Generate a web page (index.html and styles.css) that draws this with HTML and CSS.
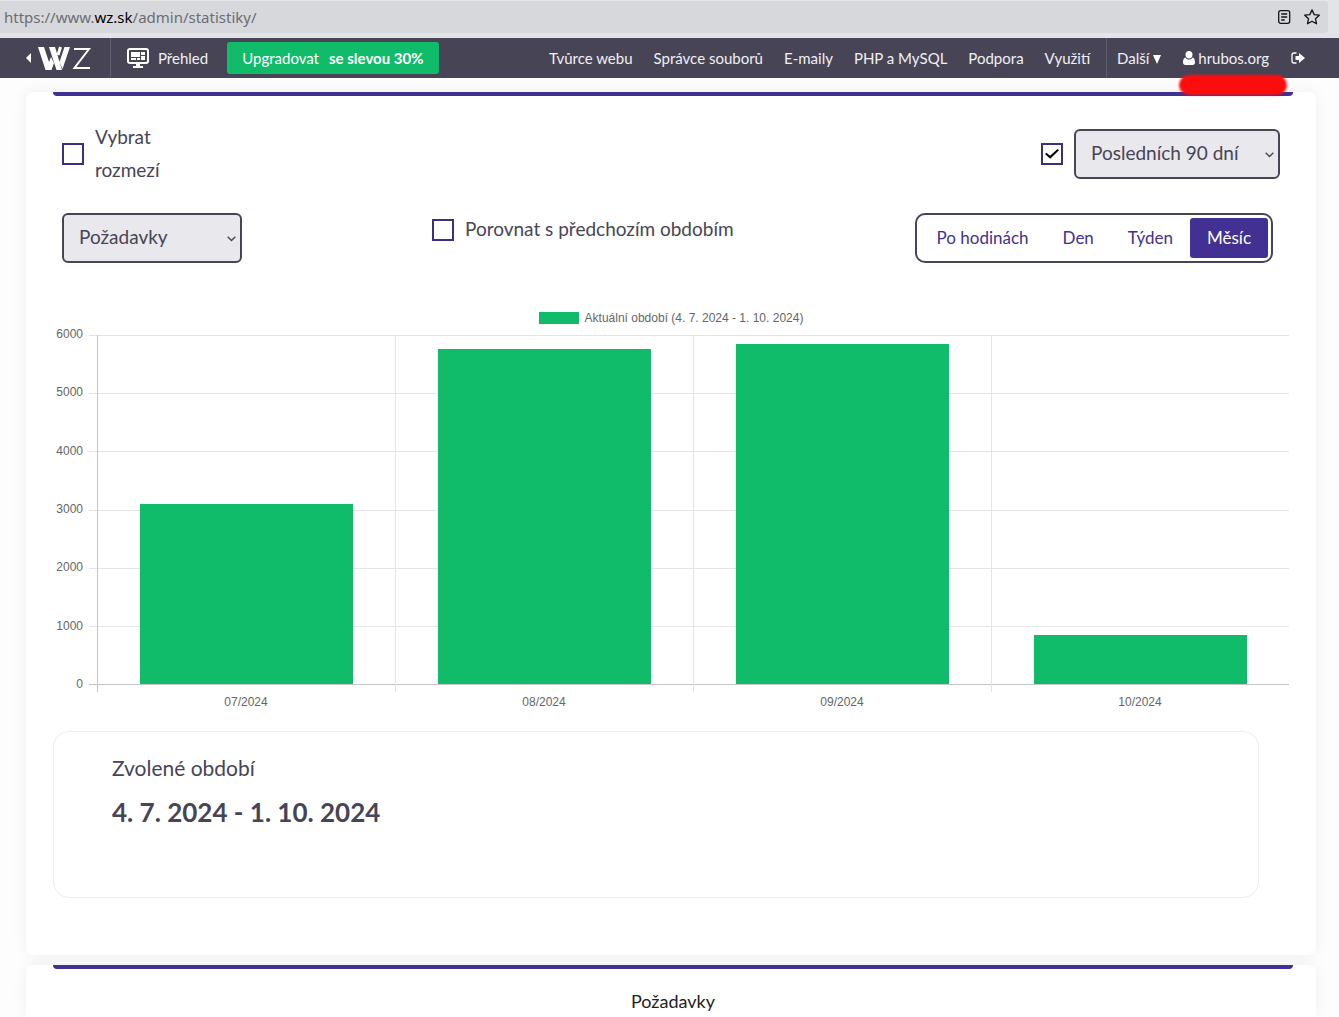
FILE: index.html
```html
<!DOCTYPE html>
<html lang="cs">
<head>
<meta charset="utf-8">
<meta name="viewport" content="width=device-width, initial-scale=1">
<title>Statistiky</title>
<link rel="stylesheet" href="styles.css">
</head>
<body>
<div class="urlbar">
  <div class="urlbar-field">
    <span class="url">https://www.<b>wz.sk</b>/admin/statistiky/</span>
    <svg class="url-icon" viewBox="0 0 16 16" width="16" height="16" aria-hidden="true"><rect x="2.7" y="1.7" width="11" height="12.6" rx="2"/><path d="M5.2 5h6M5.2 8h6M5.2 11h3.5"/></svg>
    <svg class="url-icon" viewBox="0 0 16 16" width="16" height="16" aria-hidden="true"><path d="M8 .9l2.2 4.7 5.1.6-3.8 3.5 1 5.1L8 12.3l-4.5 2.5 1-5.1L.7 6.2l5.1-.6z"/></svg>
  </div>
</div>

<header class="topbar">
  <a class="brand" href="#" aria-label="WZ">
    <svg viewBox="0 0 66 26" width="66" height="26" aria-hidden="true">
      <path d="M6 8v10L1 13z" fill="#fff"/>
      <path d="M13 2h6l5 15 2-5 3 6-2.500 7h-6zM24 2h6l7 23h-5.500zM39.500 2H45l-7.500 22-3-7z" fill="#fff"/>
      <path d="M33 10l2.500-8" fill="none" stroke="#fff" stroke-width="3"/>
      <path d="M49 4h15L49.500 23H65" fill="none" stroke="#fff" stroke-width="2"/>
    </svg>
  </a>
  <a class="overview" href="#">
    <svg viewBox="0 0 22 20" width="22" height="20" aria-hidden="true">
      <rect x="1" y="1" width="20" height="14" rx="2" fill="none" stroke="#fff" stroke-width="2"/>
      <path d="M4 4h9v5H4zM14 4h4v3h-4zM14 8h4v4h-4zM4 10h5v2H4zM10 10h3v2h-3zM9 15h4v3h3v2H6v-2h3z" fill="#fff"/>
    </svg>
    Přehled
  </a>
  <button class="upgrade" type="button"><span>Upgradovat</span><b>se slevou 30%</b></button>
  <nav class="menu">
    <a href="#">Tvůrce webu</a>
    <a href="#">Správce souborů</a>
    <a href="#">E-maily</a>
    <a href="#">PHP a MySQL</a>
    <a href="#">Podpora</a>
    <a href="#">Využití</a>
  </nav>
  <div class="account">
    <a href="#">Další <svg viewBox="0 0 8 9" width="8" height="9" aria-hidden="true"><path d="M0 0h8L4 9z" fill="#fff"/></svg></a>
    <a class="user" href="#">
      <svg viewBox="0 0 12 14" width="12" height="14" aria-hidden="true"><path d="M6 0a3.500 3.500 0 0 1 3.500 3.700C9.500 6 8 7.600 6 7.600S2.500 6 2.500 3.700A3.500 3.500 0 0 1 6 0zM2.500 6.600C3.300 8 4.500 8.600 6 8.600S8.700 8 9.500 6.600C11.400 7 12 9 12 11.600 12 13.200 11 14 9.800 14H2.200C1 14 0 13.200 0 11.600 0 9 .6 7 2.500 6.600z" fill="#fff"/></svg>
      hrubos.org
      <span class="marker"></span>
    </a>
    <a href="#" aria-label="Odhlásit">
      <svg viewBox="0 0 14 12" width="14" height="12" aria-hidden="true"><path d="M5.500 1H3a2 2 0 0 0-2 2v6a2 2 0 0 0 2 2h2.500" fill="none" stroke="#fff" stroke-width="1.300"/><path d="M4.500 4H8V1l6 5-6 5V8H4.500z" fill="#fff"/></svg>
    </a>
  </div>
</header>

<main class="page">
  <section class="card">
    <div class="filters">
      <div class="filter-row">
        <div class="check range">
          <input type="checkbox" id="range"><label for="range">Vybrat rozmezí</label>
        </div>
        <div class="check">
          <input type="checkbox" id="preset" checked aria-label="Přednastavené období">
          <div class="select period">
            <select aria-label="Období"><option>Posledních 90 dní</option></select>
            <svg viewBox="0 0 9 6" width="9" height="6" aria-hidden="true"><path d="M.7.700l3.800 3.800L8.300.700"/></svg>
          </div>
        </div>
      </div>
      <div class="filter-row second">
        <div class="select metric">
          <select aria-label="Metrika"><option>Požadavky</option></select>
          <svg viewBox="0 0 9 6" width="9" height="6" aria-hidden="true"><path d="M.7.700l3.800 3.800L8.300.700"/></svg>
        </div>
        <div class="check compare">
          <input type="checkbox" id="compare"><label for="compare">Porovnat s předchozím obdobím</label>
        </div>
        <div class="segments">
          <button type="button">Po hodinách</button>
          <button type="button">Den</button>
          <button type="button">Týden</button>
          <button type="button" class="active">Měsíc</button>
        </div>
      </div>
    </div>

    <figure class="chart">
      <figcaption class="legend"><span class="swatch"></span>Aktuální období (4. 7. 2024 - 1. 10. 2024)</figcaption>
      <div class="y-axis"><span>6000</span><span>5000</span><span>4000</span><span>3000</span><span>2000</span><span>1000</span><span>0</span></div>
      <div class="plot">
        <div class="lines"><i></i><i></i><i></i><i></i><i></i><i></i></div>
        <div class="bars">
          <div class="slot"><div class="bar" style="height:51.5%"></div></div>
          <div class="slot"><div class="bar" style="height:96%"></div></div>
          <div class="slot"><div class="bar" style="height:97.4%"></div></div>
          <div class="slot"><div class="bar" style="height:14%"></div></div>
        </div>
      </div>
      <div class="x-axis"><span>07/2024</span><span>08/2024</span><span>09/2024</span><span>10/2024</span></div>
    </figure>

    <div class="summary">
      <h2>Zvolené období</h2>
      <p>4. 7. 2024 - 1. 10. 2024</p>
    </div>
  </section>

  <section class="card">
    <h2 class="card-title">Požadavky</h2>
  </section>
</main>
</body>
</html>
```
FILE: styles.css
```css
* { box-sizing: border-box; }
body {
  display: flex;
  flex-direction: column;
  min-height: 100vh;
  margin: 0;
  background: #fdfdfd;
  color: #474555;
  font-family: Lato, "Open Sans", sans-serif;
  font-size: 19px;
}
a { color: inherit; text-decoration: none; }
button, select { font: inherit; color: inherit; margin: 0; }
h2, p, figure { margin: 0; }

.urlbar { background: #e3e4e8; padding: 1px 11px 5px 0; }
.urlbar-field {
  display: flex;
  align-items: center;
  gap: 12px;
  height: 32px;
  padding: 0 8px 0 4px;
  background: #d7d8dc;
  border-radius: 0 4px 4px 0;
  font: 15px "Noto Sans", sans-serif;
  color: #6c6d72;
}
.url { flex: 1; }
.url b { font-weight: 400; color: #000; }
.url-icon { fill: none; stroke: #15141a; stroke-width: 1.3; stroke-linejoin: round; }

.topbar {
  display: flex;
  align-items: center;
  height: 40px;
  padding-right: 34px;
  background: #474555;
  color: #f0eff5;
  font-size: 15px;
  white-space: nowrap;
}
.brand {
  display: flex;
  align-items: center;
  height: 100%;
  padding: 0 19px 0 25px;
  border-right: 1px solid #62606f;
}
.overview { display: flex; align-items: center; gap: 9px; padding: 0 19px 0 16px; }
.upgrade {
  display: flex;
  align-items: center;
  gap: 10px;
  height: 32px;
  padding: 0 16px 0 15px;
  border: 0;
  border-radius: 3px;
  background: #10bb69;
  color: #fff;
}
.menu { display: flex; gap: 21px; margin-left: auto; padding-right: 16px; }
.account {
  display: flex;
  align-items: center;
  gap: 22px;
  height: 100%;
  padding-left: 10px;
  border-left: 1px solid #62606f;
}
.user { position: relative; display: flex; align-items: center; gap: 3px; }
.marker {
  position: absolute;
  left: -4px;
  right: -18px;
  top: 26px;
  height: 20px;
  border-radius: 10px;
  background: #fc0d0d;
  filter: blur(1px);
}

.page {
  flex: 1;
  display: grid;
  grid-template-rows: auto 1fr;
  gap: 10px;
  padding: 14px 23px 0 26px;
}
.card {
  padding: 0 23px 57px 27px;
  border-radius: 8px;
  background: #fff;
  box-shadow: 0 0 16px rgba(0, 0, 0, 0.06);
}
.card:last-child { padding-bottom: 0; border-radius: 8px 8px 0 0; }
.card::before {
  content: "";
  display: block;
  height: 4px;
  background: #423093;
  border-radius: 0 0 4px 4px;
}
.card-title { padding-top: 20px; text-align: center; font-size: 18px; font-weight: 400; line-height: 24px; color: #222; }

.filters { padding: 24px 13px 0 9px; }
.filter-row { display: flex; align-items: center; justify-content: space-between; }
.second { display: grid; grid-template-columns: 370px 1fr auto; align-items: start; padding: 25px 7px 0 0; }
.check { display: flex; align-items: center; gap: 11px; }
.check label { padding-bottom: 2px; }
.range { width: 108px; line-height: 33px; }
.compare { height: 33px; }
.check input {
  appearance: none;
  display: grid;
  place-items: center;
  flex: none;
  width: 22px;
  height: 22px;
  margin: 0;
  border: 2px solid #3d2f80;
  background: #fff;
}
.check input:checked::before {
  content: "";
  width: 14px;
  height: 11px;
  background: #000;
  clip-path: polygon(0 50%, 10% 38%, 36% 66%, 90% 4%, 100% 16%, 37% 94%);
}

.select { position: relative; }
.select select {
  appearance: none;
  display: block;
  width: 100%;
  height: 50px;
  padding: 0 15px 3px;
  border: 2px solid #474555;
  border-radius: 6px;
  background: #e9e8ed;
}
.select svg {
  position: absolute;
  right: 6px;
  top: 23px;
  fill: none;
  stroke: #474555;
  stroke-width: 1.4;
  pointer-events: none;
}
.period { width: 206px; }
.metric { width: 180px; }

.segments {
  display: flex;
  height: 50px;
  padding: 3px;
  border: 2px solid #474555;
  border-radius: 10px;
}
.segments button {
  padding: 0 17px 2px;
  border: 0;
  border-radius: 3px;
  background: none;
  color: #423093;
  font-size: 17px;
}
.segments .active { background: #423093; color: #fff; }

.chart {
  display: grid;
  grid-template-columns: 44px 1fr;
  padding: 49px 4px 0 0;
  font: 12px/14px "Liberation Sans", Arial, sans-serif;
  color: #666;
}
.legend {
  grid-column: 1 / -1;
  display: flex;
  align-items: center;
  justify-content: center;
  gap: 6px;
  height: 12px;
  margin-bottom: 11px;
}
.swatch { width: 40px; height: 12px; background: #10bb69; }
.y-axis {
  display: flex;
  flex-direction: column;
  justify-content: space-between;
  margin: -8px 0 -6px;
  padding-right: 14px;
  text-align: right;
}
.plot { display: grid; height: 350px; }
.lines, .bars { grid-area: 1 / 1; }
.lines { display: grid; grid-auto-rows: 1fr; margin-left: -8px; border-bottom: 1px solid #c4c4c4; }
.lines i { border-top: 1px solid #e5e5e5; }
.bars, .x-axis { display: grid; grid-template-columns: repeat(4, 1fr); }
.bars { margin-bottom: -7px; }
.slot {
  display: flex;
  align-items: flex-end;
  justify-content: center;
  padding-bottom: 8px;
  border-left: 1px solid #e5e5e5;
}
.slot:first-child { border-left-color: #c4c4c4; }
.bar { width: 72%; background: #10bb69; }
.x-axis { grid-column: 2; padding-top: 10px; text-align: center; }

.summary {
  min-height: 167px;
  margin: 22px 34px 0 0;
  padding: 21px 58px;
  border: 1px solid #ededed;
  border-radius: 16px;
}
.summary h2 { font-size: 21px; font-weight: 400; line-height: 30px; }
.summary p { padding-top: 11px; font-size: 26px; font-weight: 700; line-height: 36px; }
```
